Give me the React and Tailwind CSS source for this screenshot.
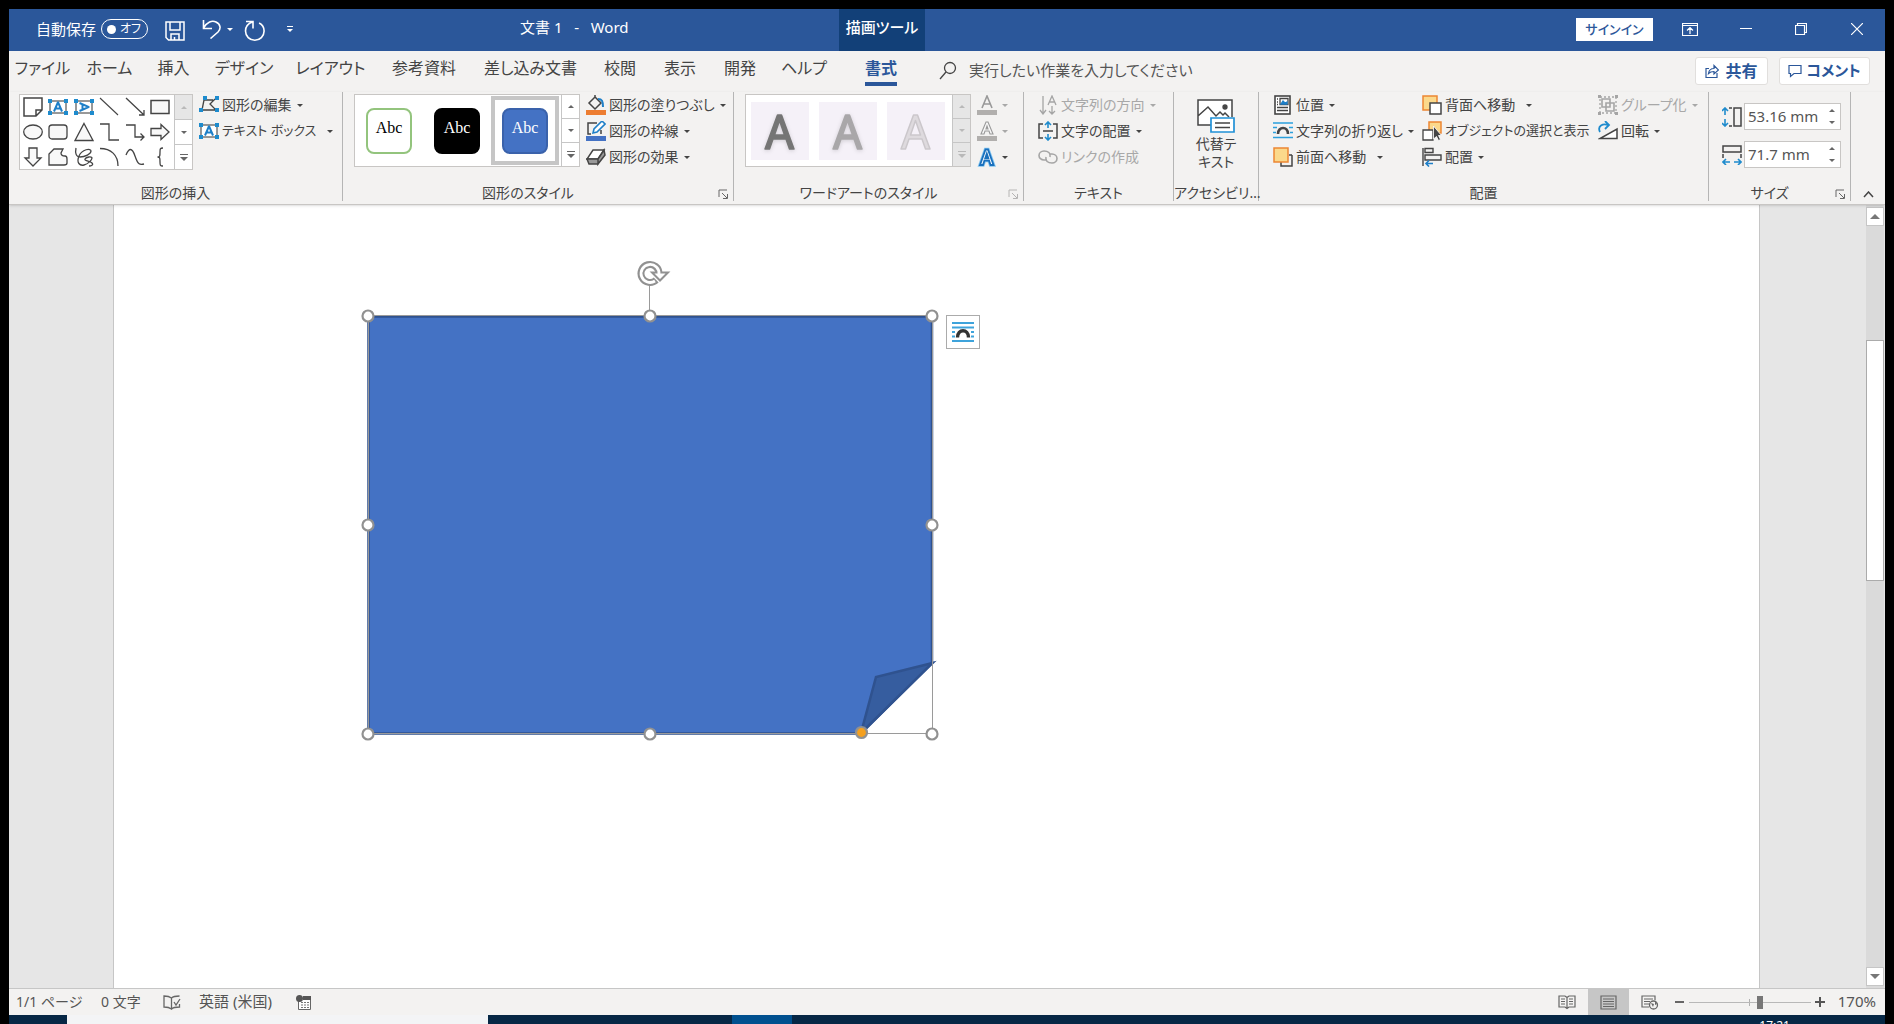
import React, { useState } from 'react';
import clsx from 'clsx';

const tabs = [
  { label: 'ファイル', width: 'w-[67px]' },
  { label: 'ホーム', width: 'w-[67px]' },
  { label: '挿入', width: 'w-[61px]' },
  { label: 'デザイン', width: 'w-[80px]' },
  { label: 'レイアウト', width: 'w-[93px]' },
  { label: '参考資料', width: 'w-[94px]' },
  { label: '差し込み文書', width: 'w-[119px]' },
  { label: '校閲', width: 'w-[60px]' },
  { label: '表示', width: 'w-[60px]' },
  { label: '開発', width: 'w-[60px]' },
  { label: 'ヘルプ', width: 'w-[68px]' },
  { label: '書式', width: 'w-[86px]' },
];

const Svg = ({ w = 20, h = 20, className, children }) => (
  <svg width={w} height={h} viewBox={`0 0 ${w} ${h}`} fill="none" stroke="#444" strokeWidth="1.3" className={clsx('shrink-0', className)} aria-hidden="true">
    {children}
  </svg>
);

const Caret = ({ className }) => (
  <svg width="6" height="3" viewBox="0 0 6 3" className={clsx('shrink-0', className)} fill="currentColor" aria-hidden="true">
    <path d="M0 0h6L3 3z" />
  </svg>
);

/* ---------- shape gallery icons ---------- */

const Corners = () => (
  <path d="M0 2h4v4H0zM16 2h4v4h-4zM0 14h4v4H0zM16 14h4v4h-4z" fill="#1e8bcd" stroke="none" />
);

const TextBoxIcon = ({ vertical }) => (
  <Svg>
    <rect x="2" y="4" width="16" height="12" stroke="#777" strokeWidth="1.500" fill="#fff" />
    <path d="M6 14.500L9.800 5.500h.4L14 14.500M7.500 11.500h5" stroke="#1e7fc8" strokeWidth="2" transform={vertical ? 'rotate(90 10 10)' : undefined} />
    <Corners />
  </Svg>
);

const shapes = [
  { name: 'メモ', icon: <Svg><path d="M1 1h18v12l-6 6H1zM19 13h-6v6" fill="#fff" strokeWidth="1.500" /></Svg> },
  { name: '横書きテキスト ボックス', icon: <TextBoxIcon /> },
  { name: '縦書きテキスト ボックス', icon: <TextBoxIcon vertical /> },
  { name: '直線', icon: <Svg><path d="M1 1l18 17" strokeWidth="1.100" /></Svg> },
  { name: '矢印', icon: <Svg><path d="M1 1l18 17M19 13v5h-5" /></Svg> },
  { name: '正方形', icon: <Svg><rect x="1" y="3.500" width="18" height="13" fill="#f8f8f8" strokeWidth="1.500" /></Svg> },
  { name: '楕円', icon: <Svg><ellipse cx="10" cy="10" rx="9.300" ry="7" fill="#f8f8f8" /></Svg> },
  { name: '角丸四角形', icon: <Svg><rect x="1" y="3" width="18" height="14" rx="3" fill="#f8f8f8" /></Svg> },
  { name: '三角形', icon: <Svg><path d="M10 1.500L19 18.500H1z" fill="#f8f8f8" /></Svg> },
  { name: 'カギ線', icon: <Svg><path d="M1 2h9v16h10" /></Svg> },
  { name: 'カギ線矢印', icon: <Svg><path d="M1 3h9v12h9M15.500 11.500L19 15l-3.500 3.500" /></Svg> },
  { name: '右矢印', icon: <Svg><path d="M1 6.500h10V2.500l8 7.500-8 7.500v-4H1z" fill="#f8f8f8" /></Svg> },
  { name: '下矢印', icon: <Svg><path d="M6 1h8v10h4l-8 8-8-8h4z" fill="#f8f8f8" /></Svg> },
  { name: 'フリーフォーム', icon: <Svg><path d="M1 18V7l5-5h9l-2 4q0 3 4 3 2 0 2 3v4q0 2-3 2z" fill="#f8f8f8" /></Svg> },
  { name: 'フリーハンド', icon: <Svg><path d="M2 1c-1 5 0 9 4 9 5 0 11-3 11-6s-9-2-12 5 1 10 5 9 8-5 8-7-6-1-7 1 5 2 7 4-1 3-3 3" /></Svg> },
  { name: '円弧', icon: <Svg><path d="M1 1.500C12 1.500 19 8 19 19" /></Svg> },
  { name: '曲線', icon: <Svg><path d="M1 8c3-7 6-8 9 1s5 9 9 8" /></Svg> },
  { name: '左中かっこ', icon: <Svg><path d="M13 1c-3 0-3 1-3 4 0 4 0 5-2.500 5C10 10 10 11 10 15c0 3 0 4 3 4" /></Svg> },
];

/* ---------- shared ribbon pieces ---------- */

const GalleryScroll = ({ disabled, firstDisabled }) => {
  const cell = 'flex w-[18px] flex-1 items-center justify-center border-l border-[#c6c6c6]';
  return (
    <div className="flex shrink-0 flex-col">
      <button type="button" aria-label="前の行" className={clsx(cell, disabled || firstDisabled ? 'bg-[#e6e6e6] text-[#b9b9b9]' : 'text-[#666]')}>
        <Caret className="rotate-180" />
      </button>
      <button type="button" aria-label="次の行" className={clsx(cell, 'border-t', disabled ? 'bg-[#e6e6e6] text-[#b9b9b9]' : 'text-[#666]')}>
        <Caret />
      </button>
      <button type="button" aria-label="その他" className={clsx(cell, 'flex-col gap-[2px] border-t', disabled ? 'bg-[#e6e6e6] text-[#b9b9b9]' : 'text-[#666]')}>
        <span className="h-px w-[8px] bg-current" />
        <svg width="8" height="4" viewBox="0 0 8 4" fill="currentColor" aria-hidden="true"><path d="M0 0h8L4 4z" /></svg>
      </button>
    </div>
  );
};

const RibbonButton = ({ icon, label, caret = true, wide, small, disabled }) => (
  <button
    type="button"
    disabled={disabled}
    className={clsx('flex h-[26px] items-center gap-[3px] whitespace-nowrap', small ? 'text-[13px]' : 'text-sm', disabled ? 'text-[#a8a8a8]' : 'text-[#444]')}
  >
    {icon}
    {label && <span>{label}</span>}
    {caret && <Caret className={wide ? 'ml-[8px]' : 'ml-[2px]'} />}
  </button>
);

const Group = ({ label, width, launcher, launcherOff, children }) => (
  <section className={clsx('flex h-[109px] shrink-0 flex-col border-r border-[#b5b5b5]', width)}>
    <div className="flex h-[93px] shrink-0 items-start">{children}</div>
    <div className={clsx('relative text-center text-sm leading-4 whitespace-nowrap text-[#444]', launcher && 'pr-[20px]')}>
      {label}
      {launcher && (
        <button type="button" aria-label={`${label}の詳細`} className="absolute right-[4px] bottom-[2px]">
          <Svg w={11} h={10} className={launcherOff ? 'opacity-35' : 'opacity-80'}>
            <path d="M1 8V1h8M4 4l5 5M9.500 5v4.500H5" strokeWidth="1" />
          </Svg>
        </button>
      )}
    </div>
  </section>
);

const styleSwatches = [
  { name: '枠線のみ', box: 'border-2 border-[#93c47d] bg-white text-black' },
  { name: '塗りつぶし 黒', box: 'border-2 border-black bg-black text-white' },
  { name: '塗りつぶし 青', box: 'border-2 border-[#3a62ab] bg-[#4472c4] text-white' },
];

const wordArts = [
  { fill: '#757575', stroke: '#757575', shadow: true },
  { fill: '#a9a7a9', stroke: '#a9a7a9', shadow: true },
  { fill: '#dedade', stroke: '#cbc7cb' },
];

const SizeBox = ({ id, label, icon, value, onChange }) => (
  <div className="flex items-center">
    <label htmlFor={id} aria-label={label}>{icon}</label>
    <div className="ml-[2px] flex h-[27px] w-[97px] border border-[#c8c6c4] bg-white">
      <input id={id} value={value} onChange={e => onChange(e.target.value)} className="w-[78px] pl-[3px] text-[15px] text-[#555] outline-none" />
      <div className="flex flex-1 flex-col items-center justify-around text-[#666]">
        <button type="button" aria-label={`${label}を増やす`}><Caret className="rotate-180" /></button>
        <button type="button" aria-label={`${label}を減らす`}><Caret /></button>
      </div>
    </div>
  </div>
);

/* ---------- title bar ---------- */

const TitleBar = () => (
  <header className="flex h-[42px] shrink-0 bg-[#2b579a] text-white">
    <div className="flex w-[511px] items-center pb-[2px] pl-[27px]">
      <span className="text-[15px]">自動保存</span>
      <button type="button" role="switch" aria-checked="false" aria-label="自動保存" className="ml-[5px] flex h-[20px] w-[47px] shrink-0 items-center justify-between rounded-full border border-white pr-[6px] pl-[5px] text-xs whitespace-nowrap">
        <span className="h-[9px] w-[9px] rounded-full bg-white" />
        オフ
      </button>
      <button type="button" aria-label="上書き保存" className="ml-[17px] pt-[3px]">
        <Svg w={20} h={20}><path d="M1 1h18v18H3.500L1 16.500zM5 1v8h10V1M6 19v-6h8v6M9.500 19v-3" stroke="#fff" strokeWidth="1.500" /></Svg>
      </button>
      <button type="button" aria-label="元に戻す" className="ml-[17px]">
        <Svg w={20} h={20}><path d="M1.500 1v8.500H10M1.500 9C5 3 10 1 14 3c5 2.500 5 7 2 10l-7.500 6.500" stroke="#fff" strokeWidth="1.600" /></Svg>
      </button>
      <button type="button" aria-label="元に戻すの一覧" className="ml-[5px]"><Caret /></button>
      <button type="button" aria-label="やり直し" className="ml-[11px] pt-[3px]">
        <Svg w={22} h={22}><path d="M2 1.500h7v7M8.500 2C4 3.500 1.500 7 1.500 11a9.300 9.300 0 0 0 18.600 0c0-3.500-2-6.500-5-8" stroke="#fff" strokeWidth="1.600" /></Svg>
      </button>
      <button type="button" aria-label="クイック アクセス ツール バーのカスタマイズ" className="ml-[21px] flex flex-col gap-[2px]">
        <span className="h-px w-[6px] bg-white" />
        <Caret />
      </button>
    </div>
    <h1 className="w-[319px] pt-[7px] text-[15px] leading-[22px] whitespace-pre">文書 1   -   Word</h1>
    <div className="w-[86px] bg-[#124078] pt-[7px] text-center text-[15px] leading-[22px] font-medium">描画ツール</div>
    <div className="ml-auto flex items-center pb-[2px]">
      <button type="button" className="mr-[29px] h-[23px] w-[77px] bg-white text-[13px] leading-[23px] font-medium text-[#2b579a]">サインイン</button>
      <button type="button" aria-label="リボンの表示オプション" className="mr-[42px]">
        <Svg w={16} h={13}><path d="M.5.500h15v12H.5zM.5 2.500h15M8 11V5M5 7.500l3-3 3 3" stroke="#fff" strokeWidth="1.200" /></Svg>
      </button>
      <button type="button" aria-label="最小化" className="mr-[43px]">
        <Svg w={12} h={12}><path d="M0 5.500h12" stroke="#fff" strokeWidth="1" /></Svg>
      </button>
      <button type="button" aria-label="元のサイズに戻す" className="mr-[44px]">
        <Svg w={12} h={12}><path d="M.5 2.500h9v9h-9zM2.500 2V.5h9v9H10" stroke="#fff" strokeWidth="1.200" /></Svg>
      </button>
      <button type="button" aria-label="閉じる" className="mr-[22px]">
        <Svg w={12} h={12}><path d="M0 0l12 12M12 0L0 12" stroke="#fff" strokeWidth="1.200" /></Svg>
      </button>
    </div>
  </header>
);

const TabRow = () => (
  <nav className="flex h-[41px] shrink-0 items-center pb-[2px] text-base text-[#444]">
    {tabs.map(t => (
      <button
        key={t.label}
        type="button"
        className={clsx('flex h-[35px] shrink-0 justify-center pt-[2px] whitespace-nowrap', t.width, t.label === '書式' && 'font-bold text-[#2b579a]')}
      >
        <span className={clsx('h-[31px] leading-[27px]', t.label === '書式' && 'border-b-4 border-[#2b579a]')}>{t.label}</span>
      </button>
    ))}
    <label htmlFor="tell-me" className="ml-[15px]" aria-label="操作アシスト">
      <Svg w={18} h={19}><circle cx="11" cy="7" r="5.500" /><path d="M7 11l-6 7" /></Svg>
    </label>
    <input id="tell-me" placeholder="実行したい作業を入力してください" className="ml-[12px] w-[260px] bg-transparent text-[15px] outline-none placeholder:text-[#555]" />
    <button type="button" className="ml-auto flex h-[28px] w-[73px] items-center justify-center gap-[6px] rounded-[3px] border border-[#e1dfdd] bg-white font-bold text-[#2b579a]">
      <Svg w={14} h={14}><path d="M4 4.500H1v9h11V9M3.500 9.500C4 6 6 4.500 9 4.500V1.500l4.500 4.500L9 10V7.500c-2.500 0-4 .5-5.500 2z" stroke="#2b579a" strokeWidth="1.200" /></Svg>
      共有
    </button>
    <button type="button" className="mr-[15px] ml-[11px] flex h-[28px] w-[91px] items-center justify-center gap-[4px] rounded-[3px] border border-[#e1dfdd] bg-white text-[15px] font-bold text-[#2b579a]">
      <Svg w={14} h={14}><path d="M1 1.500h12v8H6l-3.500 3v-3H1z" stroke="#2b579a" strokeWidth="1.200" /></Svg>
      コメント
    </button>
  </nav>
);

/* ---------- ribbon ---------- */

const Ribbon = () => {
  const [height, setHeight] = useState('53.16 mm');
  const [width, setWidth] = useState('71.7 mm');

  return (
    <div className="relative z-10 flex h-[113px] shrink-0 border-b border-[#c8c6c4] shadow-sm">
      <Group label="図形の挿入" width="w-[334px]">
        <div className="mt-[2px] ml-[10px] flex h-[76px] border border-[#c8c6c4] bg-white">
          <div className="grid w-[154px] grid-cols-6 grid-rows-3 place-items-center pr-px">
            {shapes.map(s => <button key={s.name} type="button" aria-label={s.name}>{s.icon}</button>)}
          </div>
          <GalleryScroll firstDisabled />
        </div>
        <div className="ml-[6px]">
          <RibbonButton label="図形の編集" icon={
            <Svg><path d="M3 15L5 5h9M16 4l-5 5 6 6H4" /><path d="M4 1h4v4H4zM16 1h4v4h-4zM0 13h4v4H0zM16 13h4v4h-4z" fill="#1e8bcd" stroke="none" /></Svg>
          } />
          <RibbonButton label="テキスト ボックス" wide small icon={<TextBoxIcon />} />
        </div>
      </Group>

      <Group label="図形のスタイル" width="w-[391px]" launcher>
        <div className="mt-[2px] ml-[11px] flex h-[73px] border border-[#c8c6c4] bg-white">
          {styleSwatches.map((s, i) => (
            <button key={s.name} type="button" aria-label={s.name} className={clsx('my-px flex w-[68px] items-center justify-center', i === 2 && 'border-4 border-[#c6c6c6]')}>
              <span className={clsx("flex h-[46px] w-[46px] justify-center rounded-[8px] pt-[6px] font-['Liberation_Serif',serif] text-base", s.box)}>Abc</span>
            </button>
          ))}
          <div className="w-[2px]" />
          <GalleryScroll />
        </div>
        <div className="ml-[6px]">
          <RibbonButton label="図形の塗りつぶし" icon={
            <Svg><path d="M9 2l6 6-6 6-6-6zM9 2V0" strokeWidth="1.500" /><path d="M12 4c4 0 5 2 5 8" stroke="#1e7fc8" strokeWidth="2" /><path d="M0 15h20v5H0z" fill="#ed7d31" stroke="none" /></Svg>
          } />
          <RibbonButton label="図形の枠線" icon={
            <Svg><path d="M11 2H2v11h3M15 9v4" strokeWidth="1.500" /><path d="M7 12l1-4 8-8 3 3-8 8z" stroke="#1e7fc8" fill="#fff" strokeWidth="1.600" /><path d="M0 15h20v5H0z" fill="#4472c4" stroke="none" /></Svg>
          } />
          <RibbonButton label="図形の効果" icon={
            <Svg><path d="M7 3h11l-6 9H1z" fill="#fff" strokeWidth="1.500" /><path d="M1 12h11v5H3zM18 3l1 5-7 9v-5z" fill="#999" strokeWidth="1.500" /></Svg>
          } />
        </div>
      </Group>

      <Group label="ワードアートのスタイル" width="w-[290px]" launcher launcherOff>
        <div className="mt-[2px] ml-[11px] flex h-[73px] border border-[#c8c6c4] bg-white">
          {wordArts.map(a => (
            <button key={a.fill} type="button" aria-label="ワードアート" className="flex w-[68px] items-center justify-center">
              <span className="flex h-[58px] w-[58px] items-center justify-center bg-[#f5f1f8]">
                <Svg w={34} h={40} className={clsx(a.shadow && 'drop-shadow-sm')}>
                  <path d="M2 38L14.500 4h4L31 38h-4.500l-3.500-10H10L6.500 38zM11.500 24h10L16.500 9.500z" fill={a.fill} stroke={a.stroke} strokeWidth="1.500" fillRule="evenodd" strokeLinejoin="round" />
                </Svg>
              </span>
            </button>
          ))}
          <div className="w-[2px]" />
          <GalleryScroll disabled />
        </div>
        <div className="ml-[6px]">
          <RibbonButton disabled icon={
            <Svg><path d="M5 13L10 1l5 12M7 9h6" stroke="#999" strokeWidth="1.600" /><path d="M0 15h20v5H0z" fill="#b1afad" stroke="none" /></Svg>
          } />
          <RibbonButton disabled icon={
            <Svg><path d="M4 13L9 1h2l5 12h-3l-1-3H8l-1 3zM9 8h2l-1-3z" stroke="#999" strokeWidth="1.100" fill="#f8f8f8" /><path d="M0 15h20v5H0z" fill="#b1afad" stroke="none" /></Svg>
          } />
          <RibbonButton icon={
            <Svg><path d="M3 18L8.500 2.500h2.500L16.500 18h-3L12 13.500H7.500L6 18zM8.300 11h3l-1.500-4.500z" stroke="#83c5f0" strokeWidth="3.500" /><path d="M3 18L8.500 2.500h2.500L16.500 18h-3L12 13.500H7.500L6 18zM8.300 11h3l-1.500-4.500z" stroke="#1a70bd" strokeWidth="1.800" fill="#fff" /></Svg>
          } />
        </div>
      </Group>

      <Group label="テキスト" width="w-[150px]">
        <div className="ml-[14px]">
          <RibbonButton label="文字列の方向" disabled icon={
            <Svg><path d="M5 1v17M2 15l3 4 3-4M10 10l4-9 4 9M11.500 7h5M14 11v8M11 16l3 3 3-3" stroke="#a5a5a5" /></Svg>
          } />
          <RibbonButton label="文字の配置" icon={
            <Svg><path d="M5 3H1v14h4M15 3h4v14h-4M5 10h10" strokeWidth="1.500" /><path d="M10 1v6M7 4l3-3 3 3M10 19v-6M7 16l3 3 3-3" stroke="#1e8bcd" strokeWidth="1.600" /></Svg>
          } />
          <RibbonButton label="リンクの作成" caret={false} disabled icon={
            <Svg><path d="M9 13H6a5 4.500 0 1 1 0-9c4 0 7 2 6 6M11 7h3a5 4.500 0 1 1 0 9c-4 0-7-2-6-6" stroke="#a5a5a5" strokeWidth="1.600" /></Svg>
          } />
        </div>
      </Group>

      <Group label="アクセシビリ…" width="w-[85px]">
        <button type="button" className="flex w-full flex-col items-center pt-[7px] text-sm leading-[18px] text-[#444]">
          <Svg w={38} h={36}>
            <path d="M14 26H1V1h34v17M1 17l10-9 8 9 4-4 3 3 2-2 4 4" fill="#fff" strokeWidth="1.500" />
            <circle cx="28" cy="8" r="2" fill="#444" />
            <path d="M14 19h23v14H14z" fill="#fff" stroke="#2191d6" strokeWidth="1.700" />
            <path d="M18 24h15M18 28.500h15" />
          </Svg>
          <span>代替テ</span>
          <span>キスト</span>
        </button>
      </Group>

      <Group label="配置" width="w-[450px]">
        <div className="ml-[14px] w-[149px]">
          <RibbonButton label="位置" icon={
            <Svg><rect x="2" y="1" width="15" height="18" fill="#fff" strokeWidth="1.600" /><path d="M7 3.500h8v6H7zM4 12.500h11M4 15.500h11M4 4h1M4 7h1M4 9.500h1" /><path d="M8 9l2-3 2 2 2-1v2z" fill="#1e7fc8" stroke="#1e7fc8" /></Svg>
          } />
          <RibbonButton label="文字列の折り返し" icon={
            <Svg><path d="M0 2h20M0 6.500h4M16 6.500h4M0 11.500h3M17 11.500h3M0 16.500h20" stroke="#2ba0dd" strokeWidth="1.600" /><path d="M5 13c0-8 10-8 10 0" strokeWidth="2.600" /></Svg>
          } />
          <RibbonButton label="前面へ移動" wide icon={
            <Svg><path d="M19 8v11H8v-4M19 8h-3" strokeWidth="1.500" /><path d="M1 1h14v14H1z" fill="#fbd98b" stroke="#ed8733" strokeWidth="1.500" /></Svg>
          } />
        </div>
        <div className="w-[176px]">
          <RibbonButton label="背面へ移動" wide icon={
            <Svg><path d="M1 1h14v14H1z" fill="#fbd98b" stroke="#ed8733" strokeWidth="1.500" /><path d="M8 8h11v11H8z" fill="#fff" strokeWidth="1.500" /></Svg>
          } />
          <RibbonButton label="オブジェクトの選択と表示" caret={false} small icon={
            <Svg><path d="M7 1h12v11H7z" fill="#fbd98b" stroke="#ed8733" strokeWidth="1.500" /><path d="M1 9h10v10H1z" fill="#fff" /><path d="M11.500 5v13l3-2.500 2 4 2-1-2-4h3z" fill="#444" stroke="#fff" strokeWidth=".8" /></Svg>
          } />
          <RibbonButton label="配置" icon={
            <Svg><path d="M1 1v18M3 1.500h8v4H3zM3 8h16v5H3z" strokeWidth="1.400" /><path d="M11 16.500H4M7 13.500l-3 3 3 3" stroke="#1e7fc8" strokeWidth="1.600" /></Svg>
          } />
        </div>
        <div>
          <RibbonButton label="グループ化" disabled icon={
            <Svg><path d="M4 4h8v8H4zM8 8h8v8H8z" stroke="#a5a5a5" strokeWidth="1.600" /><path d="M2 2h16v16H2z" stroke="#a5a5a5" strokeDasharray="2 2" /><path d="M0 0h3v3H0zM17 0h3v3h-3zM0 17h3v3H0zM17 17h3v3h-3z" fill="#a5a5a5" stroke="none" /></Svg>
          } />
          <RibbonButton label="回転" icon={
            <Svg><path d="M2 17.500h17V8z" fill="#fff" strokeWidth="1.500" /><path d="M2 11C-1 5 5 2 10 4M7 0l4 4-4 4" stroke="#1e8bcd" strokeWidth="1.800" /></Svg>
          } />
        </div>
      </Group>

      <Group label="サイズ" width="w-[142px]" launcher>
        <div className="ml-[13px] flex flex-col gap-[11px] pt-[11px]">
          <SizeBox id="shape-height" label="図形の高さ" value={height} onChange={setHeight} icon={
            <Svg><path d="M12 1h7v18h-7zM7 1h3M7 19h3" strokeWidth="1.500" /><path d="M3 1v7M0 4l3-3 3 3M3 19v-7M0 16l3 3 3-3" stroke="#1e8bcd" strokeWidth="1.600" /></Svg>
          } />
          <SizeBox id="shape-width" label="図形の幅" value={width} onChange={setWidth} icon={
            <Svg><path d="M1 1h18v6H1zM1 9v4M19 9v4" strokeWidth="1.500" /><path d="M1 17h7M4 14l-3 3 3 3M19 17h-7M16 14l3 3-3 3" stroke="#1e8bcd" strokeWidth="1.600" /></Svg>
          } />
        </div>
      </Group>

      <button type="button" aria-label="リボンを折りたたむ" className="ml-auto self-end pr-[11px] pb-[6px]">
        <Svg w={11} h={7}><path d="M1 6l4.500-5L10 6" strokeWidth="1.500" /></Svg>
      </button>
    </div>
  );
};

/* ---------- document ---------- */

const handles = [[368, 316], [650, 316], [932, 316], [368, 525], [932, 525], [368, 734], [650, 734], [932, 734]];

const SelectedShape = () => (
  <svg width="590" height="490" viewBox="359 260 590 490" className="absolute top-[55px] left-[245px]" role="img" aria-label="図形: メモ">
    <path d="M368.500 316.500H932V663L861 733.500H368.500z" fill="#4472c4" stroke="#2f528f" strokeWidth="2.500" />
    <path d="M932.500 663L876 677L861 733z" fill="#365d9f" stroke="#2f528f" strokeWidth="2.500" />
    <path d="M368.500 315.500H932.500V733.500H368.500zM649.500 285V316" fill="none" stroke="#9a9a9a" strokeWidth="1" />
    {handles.map(([x, y]) => <circle key={`${x}-${y}`} cx={x} cy={y} r="5.500" fill="#fff" stroke="#919191" strokeWidth="2.200" />)}
    <circle cx="861.500" cy="732.500" r="5.500" fill="#f5a01e" stroke="#919191" strokeWidth="2.200" />
    {/* rotation handle */}
    <path d="M656.200 280A9 9 0 1 1 659 273.500" fill="none" stroke="#919191" strokeWidth="7" />
    <path d="M652 272.500h16l-8 8z" fill="#fff" stroke="#919191" strokeWidth="2" />
    <path d="M655 281A9 9 0 1 1 659 274.500" fill="none" stroke="#fff" strokeWidth="2.800" />
  </svg>
);

const Workspace = () => (
  <main className="flex min-h-0 flex-1 bg-[#e6e6e6]">
    <div className="relative mr-[106px] ml-[104px] flex-1 overflow-hidden border-x border-[#c6c6c6] bg-white">
      <SelectedShape />
      <button type="button" aria-label="レイアウト オプション" className="absolute top-[110px] left-[832px] flex h-[34px] w-[34px] items-center justify-center border border-[#ababab] bg-white">
        <Svg w={22} h={22}>
          <path d="M0 2h22M0 6.500h22M0 11h3M19 11h3M0 15.500h3M19 15.500h3M0 20h22" stroke="#3ea3db" strokeWidth="1.800" />
          <path d="M5.500 16.500c0-9 11-9 11 0" stroke="#333" strokeWidth="3.400" />
        </Svg>
      </button>
    </div>
    <div className="mr-px flex w-[18px] flex-col bg-[#dadada] pt-[2px] pb-[2px] text-[#777]">
      <button type="button" aria-label="上へスクロール" className="flex h-[19px] items-center justify-center border border-[#c6c6c6] bg-white">
        <svg width="10" height="5" viewBox="0 0 10 5" fill="currentColor" aria-hidden="true"><path d="M0 5h10L5 0z" /></svg>
      </button>
      <div className="flex flex-1 flex-col">
        <div className="flex-[114]" />
        <div className="flex-[240] border border-[#ababab] bg-white" />
        <div className="flex-[388]" />
      </div>
      <button type="button" aria-label="下へスクロール" className="flex h-[19px] items-center justify-center border border-[#c6c6c6] bg-white">
        <svg width="10" height="5" viewBox="0 0 10 5" fill="currentColor" aria-hidden="true"><path d="M0 0h10L5 5z" /></svg>
      </button>
    </div>
  </main>
);

const StatusBar = () => {
  const [zoom, setZoom] = useState(170);

  return (
    <footer className="flex h-[27px] shrink-0 items-center border-t border-[#c6c6c6] bg-[#f3f2f1] text-sm text-[#555]">
      <span className="ml-[7px] w-[85px]">1/1 ページ</span>
      <span className="w-[62px]">0 文字</span>
      <button type="button" aria-label="文章校正">
        <Svg w={18} h={15}><path d="M8.500 3C6 1 4 1 1 1v11c3 0 5 0 7.500 2zM8.500 3c2-2 4-2 8-2M8.500 14c2-2 4-2 8-2V9M11 7l2 3 4-6" stroke="#666" /></Svg>
      </button>
      <span className="ml-[18px] w-[97px] text-[15px]">英語 (米国)</span>
      <button type="button" aria-label="マクロの記録">
        <Svg w={16} h={15}><path d="M2.500 5v9.500h12V5" fill="#fff" stroke="#666" strokeWidth="1" /><path d="M5 7.500h8M5 10h8M5 12.500h8" stroke="#777" strokeWidth="1" strokeDasharray="2 1" /><path d="M7 1h8v4H7z" fill="#555" stroke="none" /><circle cx="3.500" cy="3.500" r="3.500" fill="#555" stroke="none" /></Svg>
      </button>

      <div className="ml-auto flex h-full items-center">
        <button type="button" aria-label="閲覧モード">
          <Svg w={18} h={15}><path d="M9 2.500L7 1H1v11h6l2 1.500L11 12h6V1h-6zM9 2v12M3 4h4M3 6.500h4M3 9h4M11 4h4M11 6.500h4M11 9h4" stroke="#666" strokeWidth="1.200" /></Svg>
        </button>
        <button type="button" aria-label="印刷レイアウト" className="mx-[12px] flex h-full w-[41px] items-center justify-center bg-[#c6c6c6]">
          <Svg w={17} h={15}><path d="M1 1h15v13H1zM3 4h11M3 6.500h11M3 9h11M3 11.500h11" stroke="#666" strokeWidth="1.200" /></Svg>
        </button>
        <button type="button" aria-label="Web レイアウト">
          <Svg w={18} h={15}><path d="M8 12H1V1h13v4M3 4h9M3 6.500h6M3 9h5" stroke="#666" strokeWidth="1.200" /><circle cx="12.500" cy="10" r="4" stroke="#666" /><path d="M10 8l3 1-1 3zM14 6l2 3-2 1z" fill="#666" stroke="none" /></Svg>
        </button>
        <button type="button" aria-label="縮小" className="ml-[16px] h-[2px] w-[9px] bg-[#666]" onClick={() => setZoom(zoom - 10)} />
        <div className="relative ml-[5px] flex h-full w-[122px] items-center">
          <span className="absolute left-[60px] h-[7px] w-px bg-[#b0b0b0]" />
          <input
            type="range"
            min="53"
            max="253"
            value={zoom}
            onChange={e => setZoom(Number(e.target.value))}
            aria-label="ズーム"
            className="relative h-[13px] w-full appearance-none bg-transparent [&::-webkit-slider-runnable-track]:h-px [&::-webkit-slider-runnable-track]:bg-[#b8b8b8] [&::-webkit-slider-thumb]:-mt-[6px] [&::-webkit-slider-thumb]:h-[13px] [&::-webkit-slider-thumb]:w-[6px] [&::-webkit-slider-thumb]:appearance-none [&::-webkit-slider-thumb]:bg-[#777]"
          />
        </div>
        <button type="button" aria-label="拡大" className="ml-[4px]" onClick={() => setZoom(zoom + 10)}>
          <Svg w={10} h={10}><path d="M0 5h10M5 0v10" stroke="#555" strokeWidth="2" /></Svg>
        </button>
        <span className="w-[60px] pr-[9px] text-right text-[15px]">{zoom}%</span>
      </div>
    </footer>
  );
};

const Taskbar = () => (
  <div className="flex h-[9px] shrink-0 overflow-hidden bg-[#062745]">
    <div className="ml-[58px] w-[421px] bg-[#f3f4f6]" />
    <div className="ml-[244px] w-[60px] bg-[#00508f]" />
    <span className="mt-[4px] mr-[95px] ml-auto text-xs leading-[14px] text-white">17:21</span>
  </div>
);

const App = () => (
  <div className="flex h-screen flex-col overflow-hidden bg-black px-[9px] pt-[9px] font-['Noto_Sans','Noto_Sans_CJK_JP',sans-serif] [font-feature-settings:'palt']">
    <TitleBar />
    <div className="flex min-h-0 flex-1 flex-col bg-[#f3f2f1]">
      <TabRow />
      <Ribbon />
      <Workspace />
      <StatusBar />
    </div>
    <Taskbar />
  </div>
);

export default App;
